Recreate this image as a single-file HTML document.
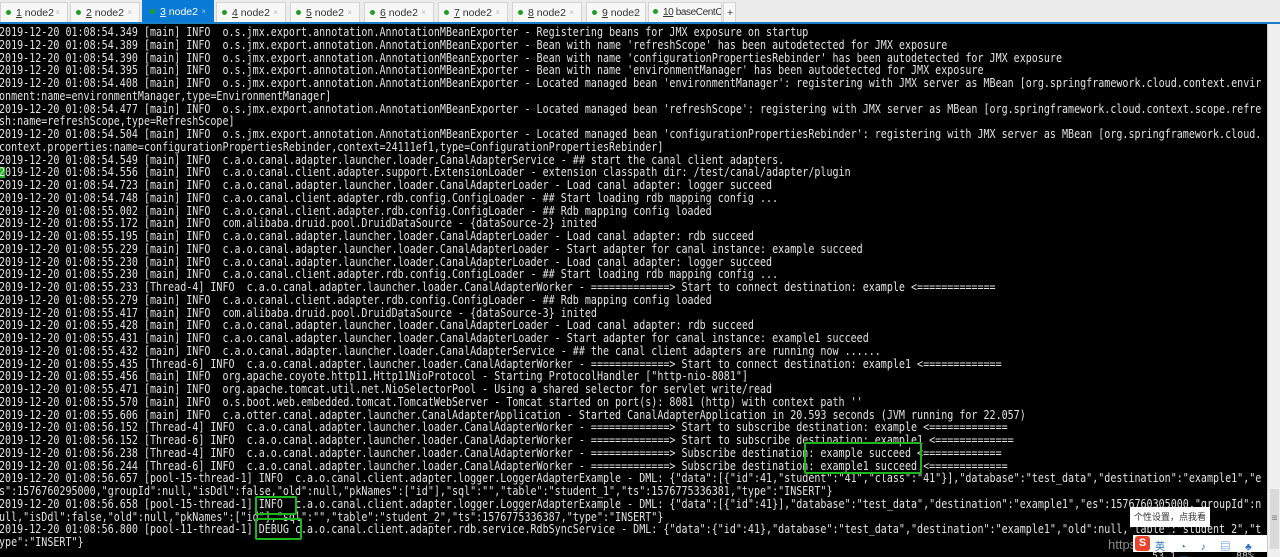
<!DOCTYPE html>
<html><head><meta charset="utf-8"><style>
html,body{margin:0;padding:0;width:1280px;height:557px;overflow:hidden;background:#000}
#tabs{position:absolute;left:0;top:0;width:1280px;height:22px;background:#ececec}
.tab{position:absolute;top:2px;height:20px;background:#f7f7f7;border:1px solid #d4d4d4;border-bottom:none;box-sizing:border-box;font:10.5px "Liberation Sans",sans-serif;color:#333;line-height:20px;padding-left:5px;white-space:nowrap;overflow:hidden}
.tab .d{display:inline-block;width:5px;height:5px;border-radius:50%;background:#1fa01f;margin-right:5px;vertical-align:1px}
.tab .x{position:absolute;right:7px;top:0;color:#bbb;font-size:8px}
.tab.act{background:#0a7bd4;color:#fff;border-color:#0a7bd4;top:0;height:22px;line-height:22px}
.tab.act .x{color:#9cc8ee}
#bar{position:absolute;left:0;top:22px;width:1280px;height:2px;background:#1a7fc7}
#term{position:absolute;left:0;top:24px;width:1267px;height:533px;overflow:hidden;background:#000}
#txt{position:absolute;left:-1.5px;top:2px;transform-origin:0 0;transform:scaleX(0.836);font:12px "DejaVu Sans Mono",monospace;color:#e2e2e2;line-height:12.75px;white-space:pre;width:1600px}
.box{position:absolute;border:2px solid #1db41d;border-radius:2px}
#sb{position:absolute;left:1267px;top:24px;width:13px;height:533px;background:#f0f0f0;border-left:1px solid #ccc}
</style></head><body>
<div id="tabs">
<div class="tab" style="left:0;width:68px"><span class="d"></span><u>1</u> node2<span class="x">×</span></div>
<div class="tab" style="left:70px;width:70px"><span class="d"></span><u>2</u> node2<span class="x">×</span></div>
<div class="tab act" style="left:142px;width:72px;padding-left:7px"><span class="d"></span><u>3</u> node2<span class="x">×</span></div>
<div class="tab" style="left:216px;width:70px"><span class="d"></span><u>4</u> node2<span class="x">×</span></div>
<div class="tab" style="left:290px;width:70px"><span class="d"></span><u>5</u> node2<span class="x">×</span></div>
<div class="tab" style="left:364px;width:70px"><span class="d"></span><u>6</u> node2<span class="x">×</span></div>
<div class="tab" style="left:438px;width:70px"><span class="d"></span><u>7</u> node2<span class="x">×</span></div>
<div class="tab" style="left:512px;width:70px"><span class="d"></span><u>8</u> node2<span class="x">×</span></div>
<div class="tab" style="left:586px;width:60px"><span class="d"></span><u>9</u> node2<span class="x">×</span></div>
<div class="tab" style="left:648px;width:74px;font-size:10px;letter-spacing:-0.4px;padding-left:4px"><span class="d"></span><u>10</u> baseCentOS</div>
<div class="tab" style="left:723px;width:13px;padding-left:3px">+</div>
</div>
<div id="bar"></div>
<div id="term">
<div style="position:absolute;left:0;top:143px;width:5px;height:11px;background:#1db41d"></div>
<div id="txt">2019-12-20 01:08:54.349 [main] INFO  o.s.jmx.export.annotation.AnnotationMBeanExporter - Registering beans for JMX exposure on startup
2019-12-20 01:08:54.389 [main] INFO  o.s.jmx.export.annotation.AnnotationMBeanExporter - Bean with name 'refreshScope' has been autodetected for JMX exposure
2019-12-20 01:08:54.390 [main] INFO  o.s.jmx.export.annotation.AnnotationMBeanExporter - Bean with name 'configurationPropertiesRebinder' has been autodetected for JMX exposure
2019-12-20 01:08:54.395 [main] INFO  o.s.jmx.export.annotation.AnnotationMBeanExporter - Bean with name 'environmentManager' has been autodetected for JMX exposure
2019-12-20 01:08:54.408 [main] INFO  o.s.jmx.export.annotation.AnnotationMBeanExporter - Located managed bean 'environmentManager': registering with JMX server as MBean [org.springframework.cloud.context.envir
onment:name=environmentManager,type=EnvironmentManager]
2019-12-20 01:08:54.477 [main] INFO  o.s.jmx.export.annotation.AnnotationMBeanExporter - Located managed bean 'refreshScope': registering with JMX server as MBean [org.springframework.cloud.context.scope.refre
sh:name=refreshScope,type=RefreshScope]
2019-12-20 01:08:54.504 [main] INFO  o.s.jmx.export.annotation.AnnotationMBeanExporter - Located managed bean 'configurationPropertiesRebinder': registering with JMX server as MBean [org.springframework.cloud.
context.properties:name=configurationPropertiesRebinder,context=24111ef1,type=ConfigurationPropertiesRebinder]
2019-12-20 01:08:54.549 [main] INFO  c.a.o.canal.adapter.launcher.loader.CanalAdapterService - ## start the canal client adapters.
2019-12-20 01:08:54.556 [main] INFO  c.a.o.canal.client.adapter.support.ExtensionLoader - extension classpath dir: /test/canal/adapter/plugin
2019-12-20 01:08:54.723 [main] INFO  c.a.o.canal.adapter.launcher.loader.CanalAdapterLoader - Load canal adapter: logger succeed
2019-12-20 01:08:54.748 [main] INFO  c.a.o.canal.client.adapter.rdb.config.ConfigLoader - ## Start loading rdb mapping config ...
2019-12-20 01:08:55.002 [main] INFO  c.a.o.canal.client.adapter.rdb.config.ConfigLoader - ## Rdb mapping config loaded
2019-12-20 01:08:55.172 [main] INFO  com.alibaba.druid.pool.DruidDataSource - {dataSource-2} inited
2019-12-20 01:08:55.195 [main] INFO  c.a.o.canal.adapter.launcher.loader.CanalAdapterLoader - Load canal adapter: rdb succeed
2019-12-20 01:08:55.229 [main] INFO  c.a.o.canal.adapter.launcher.loader.CanalAdapterLoader - Start adapter for canal instance: example succeed
2019-12-20 01:08:55.230 [main] INFO  c.a.o.canal.adapter.launcher.loader.CanalAdapterLoader - Load canal adapter: logger succeed
2019-12-20 01:08:55.230 [main] INFO  c.a.o.canal.client.adapter.rdb.config.ConfigLoader - ## Start loading rdb mapping config ...
2019-12-20 01:08:55.233 [Thread-4] INFO  c.a.o.canal.adapter.launcher.loader.CanalAdapterWorker - =============> Start to connect destination: example &lt;=============
2019-12-20 01:08:55.279 [main] INFO  c.a.o.canal.client.adapter.rdb.config.ConfigLoader - ## Rdb mapping config loaded
2019-12-20 01:08:55.417 [main] INFO  com.alibaba.druid.pool.DruidDataSource - {dataSource-3} inited
2019-12-20 01:08:55.428 [main] INFO  c.a.o.canal.adapter.launcher.loader.CanalAdapterLoader - Load canal adapter: rdb succeed
2019-12-20 01:08:55.431 [main] INFO  c.a.o.canal.adapter.launcher.loader.CanalAdapterLoader - Start adapter for canal instance: example1 succeed
2019-12-20 01:08:55.432 [main] INFO  c.a.o.canal.adapter.launcher.loader.CanalAdapterService - ## the canal client adapters are running now ......
2019-12-20 01:08:55.435 [Thread-6] INFO  c.a.o.canal.adapter.launcher.loader.CanalAdapterWorker - =============> Start to connect destination: example1 &lt;=============
2019-12-20 01:08:55.456 [main] INFO  org.apache.coyote.http11.Http11NioProtocol - Starting ProtocolHandler ["http-nio-8081"]
2019-12-20 01:08:55.471 [main] INFO  org.apache.tomcat.util.net.NioSelectorPool - Using a shared selector for servlet write/read
2019-12-20 01:08:55.570 [main] INFO  o.s.boot.web.embedded.tomcat.TomcatWebServer - Tomcat started on port(s): 8081 (http) with context path ''
2019-12-20 01:08:55.606 [main] INFO  c.a.otter.canal.adapter.launcher.CanalAdapterApplication - Started CanalAdapterApplication in 20.593 seconds (JVM running for 22.057)
2019-12-20 01:08:56.152 [Thread-4] INFO  c.a.o.canal.adapter.launcher.loader.CanalAdapterWorker - =============> Start to subscribe destination: example &lt;=============
2019-12-20 01:08:56.152 [Thread-6] INFO  c.a.o.canal.adapter.launcher.loader.CanalAdapterWorker - =============> Start to subscribe destination: example1 &lt;=============
2019-12-20 01:08:56.238 [Thread-4] INFO  c.a.o.canal.adapter.launcher.loader.CanalAdapterWorker - =============> Subscribe destination: example succeed &lt;=============
2019-12-20 01:08:56.244 [Thread-6] INFO  c.a.o.canal.adapter.launcher.loader.CanalAdapterWorker - =============> Subscribe destination: example1 succeed &lt;=============
2019-12-20 01:08:56.657 [pool-15-thread-1] INFO  c.a.o.canal.client.adapter.logger.LoggerAdapterExample - DML: {"data":[{"id":41,"student":"41","class":"41"}],"database":"test_data","destination":"example1","e
s":1576760295000,"groupId":null,"isDdl":false,"old":null,"pkNames":["id"],"sql":"","table":"student_1","ts":1576775336381,"type":"INSERT"}
2019-12-20 01:08:56.658 [pool-15-thread-1] INFO  c.a.o.canal.client.adapter.logger.LoggerAdapterExample - DML: {"data":[{"id":41}],"database":"test_data","destination":"example1","es":1576760305000,"groupId":n
ull,"isDdl":false,"old":null,"pkNames":["id"],"sql":"","table":"student_2","ts":1576775336387,"type":"INSERT"}
2019-12-20 01:08:56.800 [pool-11-thread-1] DEBUG c.a.o.canal.client.adapter.rdb.service.RdbSyncService - DML: {"data":{"id":41},"database":"test_data","destination":"example1","old":null,"table":"student_2","t
ype":"INSERT"}</div>
<div class="box" style="left:804px;top:418px;width:114px;height:28px"></div>
<div class="box" style="left:255px;top:472px;width:38px;height:15px"></div>
<div class="box" style="left:255px;top:494px;width:43px;height:18px"></div>
<div style="position:absolute;left:1130px;top:483px;width:80px;height:20px;background:#fff;font:9px 'Liberation Sans','Noto Sans CJK SC',sans-serif;color:#333;line-height:20px;text-align:center">个性设置，点我看看</div>
<div style="position:absolute;left:1108px;top:513px;font:13px 'Liberation Sans',sans-serif;color:#8a8a8a">https://b</div>
<div style="position:absolute;left:1133px;top:511px;width:135px;height:17px;background:#fff"></div>
<div style="position:absolute;left:1135px;top:512px;width:15px;height:15px;background:#e8452c;border-radius:3px;color:#fff;font:bold 11px 'Liberation Sans',sans-serif;text-align:center;line-height:15px">S</div>
<div style="position:absolute;left:1155px;top:514px;font:10px 'Liberation Sans','Noto Sans CJK SC',sans-serif;color:#2a6fc9;letter-spacing:6px">英 ◔ ♪ ▤ ♣ ⚙ ▦</div>
<div style="position:absolute;left:1152px;top:527px;font:10px 'DejaVu Sans Mono',monospace;color:#ccc">53,1</div>
<div style="position:absolute;left:1236px;top:527px;font:10px 'DejaVu Sans Mono',monospace;color:#ccc">88%</div>
</div>
<div id="sb"><div style="position:absolute;left:2px;top:465px;width:9px;height:60px;background:#dadada;font:10px sans-serif;color:#777;text-align:center;line-height:60px">≡</div></div>
</body></html>
